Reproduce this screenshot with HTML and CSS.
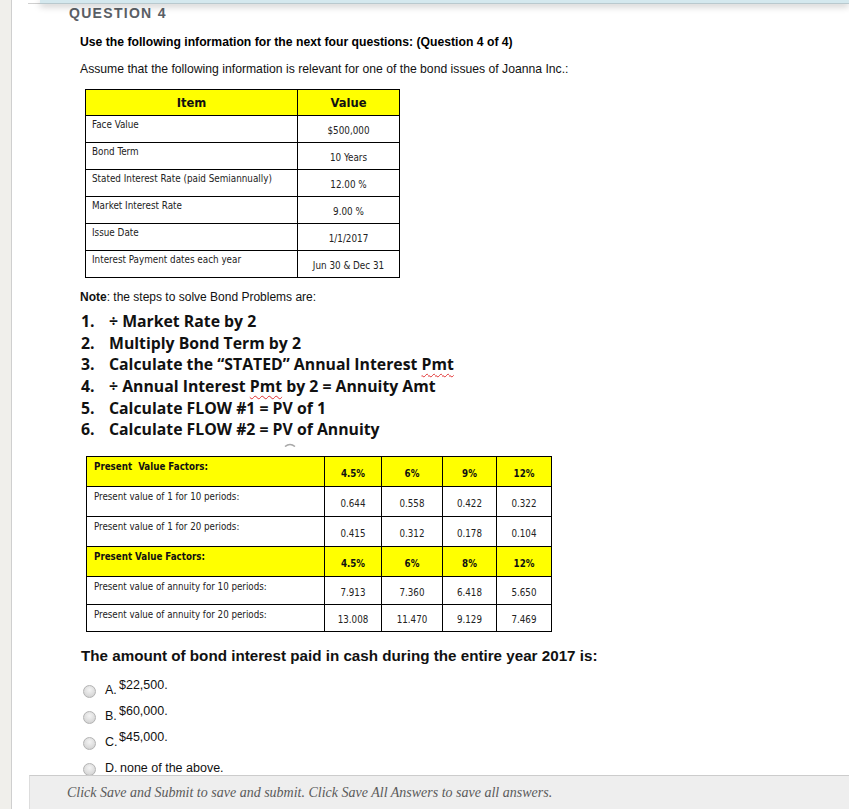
FILE: index.html
```html
<!DOCTYPE html>
<html>
<head>
<meta charset="utf-8">
<link rel="stylesheet" href="styles.css">
</head>
<body>
<div class="page">
  <div class="side"></div>
  <div class="main">
    <div class="topbar"></div>
    <div class="frame">
      <h2 class="qtitle">QUESTION 4</h2>
      <div class="qbody">
        <p class="lead"><b>Use the following information for the next four questions: (Question 4 of 4)</b></p>
        <p class="lead2">Assume that the following information is relevant for one of the bond issues of Joanna Inc.:</p>

        <table class="t1">
          <tr class="yh h26"><th class="c1">Item</th><th class="c2">Value</th></tr>
          <tr class="h27"><td class="lbl">Face Value</td><td class="val">$500,000</td></tr>
          <tr class="h27"><td class="lbl">Bond Term</td><td class="val">10 Years</td></tr>
          <tr class="h27"><td class="lbl">Stated Interest Rate (paid Semiannually)</td><td class="val">12.00 %</td></tr>
          <tr class="h27"><td class="lbl">Market Interest Rate</td><td class="val">9.00 %</td></tr>
          <tr class="h27"><td class="lbl">Issue Date</td><td class="val">1/1/2017</td></tr>
          <tr class="h27"><td class="lbl">Interest Payment dates each year</td><td class="val">Jun 30 &amp; Dec 31</td></tr>
        </table>

        <p class="note"><b>Note</b>: the steps to solve Bond Problems are:</p>
        <ol class="steps">
          <li><span class="num">1.</span><span>÷ Market Rate by 2</span></li>
          <li><span class="num">2.</span><span>Multiply Bond Term by 2</span></li>
          <li><span class="num">3.</span><span>Calculate the “STATED” Annual Interest <span class="sq">Pmt</span></span></li>
          <li><span class="num">4.</span><span>÷ Annual Interest <span class="sq">Pmt</span> by 2 = Annuity Amt</span></li>
          <li><span class="num">5.</span><span>Calculate FLOW #1 = PV of 1</span></li>
          <li class="last"><span class="num">6.</span><span>Calculate FLOW #2 = PV of Annuity</span><svg class="arc" width="12" height="4" viewBox="0 0 12 4"><path d="M1 3.5 Q6 -0.5 11 3.5" fill="none" stroke="#a8a8a8" stroke-width="1.6"/></svg></li>
        </ol>

        <table class="t2">
          <colgroup><col class="k1"><col class="k2"><col class="k3"><col class="k4"><col class="k5"></colgroup>
          <tr class="yh h30"><td class="lbl b">Present&nbsp; Value Factors:</td><td class="val b">4.5%</td><td class="val b">6%</td><td class="val b">9%</td><td class="val b">12%</td></tr>
          <tr class="h30"><td class="lbl">Present value of 1 for 10 periods:</td><td class="val">0.644</td><td class="val">0.558</td><td class="val">0.422</td><td class="val">0.322</td></tr>
          <tr class="h30"><td class="lbl">Present value of 1 for 20 periods:</td><td class="val">0.415</td><td class="val">0.312</td><td class="val">0.178</td><td class="val">0.104</td></tr>
          <tr class="yh h30"><td class="lbl b">Present Value Factors:</td><td class="val b">4.5%</td><td class="val b">6%</td><td class="val b">8%</td><td class="val b">12%</td></tr>
          <tr class="h28"><td class="lbl">Present value of annuity for 10 periods:</td><td class="val">7.913</td><td class="val">7.360</td><td class="val">6.418</td><td class="val">5.650</td></tr>
          <tr class="h27"><td class="lbl">Present value of annuity for 20 periods:</td><td class="val">13.008</td><td class="val">11.470</td><td class="val">9.129</td><td class="val">7.469</td></tr>
        </table>

        <p class="ask">The amount of bond interest paid in cash during the entire year 2017 is:</p>
        <ul class="opts">
          <li><span class="radio"></span><span class="let">A.</span><span class="ans">$22,500.</span></li>
          <li><span class="radio"></span><span class="let">B.</span><span class="ans">$60,000.</span></li>
          <li><span class="radio"></span><span class="let">C.</span><span class="ans">$45,000.</span></li>
          <li><span class="radio"></span><span class="let">D.</span><span class="ans flat">none of the above.</span></li>
        </ul>
      </div>
    </div>
    <div class="footer">Click Save and Submit to save and submit. Click Save All Answers to save all answers.</div>
  </div>
</div>
</body>
</html>
```

FILE: styles.css
```css
html, body {
  margin: 0;
  padding: 0;
  background: #ffffff;
  font-family: "Liberation Sans", Arial, sans-serif;
  color: #000;
}
.page {
  display: flex;
  height: 809px;
  overflow: hidden;
}
.side {
  flex: none;
  width: 11px;
  background: #f0efeb;
  border-right: 1px solid #cfcfcf;
}
.main {
  flex: 1;
  position: relative;
  overflow: hidden;
}
.topbar {
  position: absolute;
  top: 0;
  left: 28px;
  right: 0;
  height: 3px;
  background: #d4e8ee;
  border-bottom: 1px solid #b9c9ce;
  box-shadow: 0 2px 7px rgba(0, 0, 0, 0.28);
  z-index: 2;
}
.frame {
  margin-left: 16px;
  margin-top: 3px;
  border-top: 1px solid #d0d0d0;
}
.qtitle {
  margin: 0;
  padding: 1px 0 0 41px;
  font-size: 14px;
  line-height: 16px;
  font-weight: bold;
  letter-spacing: 1.3px;
  color: #5a6066;
}
.qbody {
  padding-left: 52px;
}
.lead {
  margin: 13px 0 0 0;
  font-size: 12.2px;
  line-height: 16px;
}
.lead2 {
  margin: 11px 0 0 0;
  font-size: 12.2px;
  line-height: 16px;
  color: #111;
}
.t1, .t2 {
  border-collapse: collapse;
  font-family: "DejaVu Sans Condensed", "DejaVu Sans", sans-serif;
  color: #222;
}
.t1 {
  margin: 12px 0 0 5px;
  width: 315px;
  table-layout: fixed;
}
.t1 td, .t1 th, .t2 td {
  border: 1.5px solid #000;
  padding: 0;
  box-sizing: border-box;
}
.h26 { height: 26px; }
.h27 { height: 27px; }
.h28 { height: 28px; }
.h30 { height: 30px; }
.yh th, .yh td {
  background: #ffff00;
}
.t1 th {
  font-size: 12.8px;
  line-height: 14px;
  font-weight: bold;
  color: #111;
  text-align: center;
  vertical-align: middle;
}
.t1 .c1 { width: 212px; }
.t1 .lbl {
  vertical-align: top;
  font-size: 9.8px;
  padding: 3px 0 0 6px;
  line-height: 11px;
}
.t1 .val {
  vertical-align: middle;
  text-align: center;
  font-size: 9.8px;
  padding-top: 3px;
  line-height: 11px;
}
.note {
  margin: 12px 0 0 0;
  font-size: 12px;
  line-height: 15px;
  color: #111;
}
.steps {
  list-style: none;
  margin: 6px 0 0 1px;
  padding: 0;
  font-family: "Open Sans", Lato, sans-serif;
  font-weight: bold;
  font-size: 15.8px;
  line-height: 21.66px;
  color: #111;
}
.steps li {
  display: flex;
  position: relative;
}
.steps .num {
  width: 28px;
  flex: none;
}
.sq {
  text-decoration: underline wavy #e03030;
  text-decoration-thickness: 1px;
  text-underline-offset: 3px;
}
.arc {
  position: absolute;
  left: 203px;
  top: 24px;
}
.t2 {
  margin: 15px 0 0 6px;
  width: 465px;
  table-layout: fixed;
}
.k1 { width: 238px; }
.k2 { width: 57px; }
.k3 { width: 61px; }
.k4 { width: 54px; }
.k5 { width: 55px; }
.t2 .lbl {
  vertical-align: top;
  font-size: 9.7px;
  line-height: 11px;
  padding: 4px 0 0 7px;
}
.t2 .val {
  vertical-align: middle;
  text-align: center;
  font-size: 9.7px;
  line-height: 11px;
  padding-top: 4px;
}
.t2 .b {
  font-weight: bold;
  color: #111;
}
.ask {
  margin: 15px 0 0 1px;
  font-size: 15.2px;
  line-height: 17px;
  font-weight: bold;
  color: #111;
}
.opts {
  list-style: none;
  margin: 15px 0 0 0;
  padding: 0;
  font-size: 12.5px;
  color: #111;
}
.opts li {
  display: flex;
  align-items: flex-start;
  height: 26px;
}
.radio {
  flex: none;
  width: 11px;
  height: 11px;
  border-radius: 50%;
  border: 1px solid #b3b3b3;
  background: radial-gradient(circle at 50% 35%, #f4f4f4 0%, #dcdcdc 60%, #c8c8c8 100%);
  margin: 6px 9px 0 3px;
}
.let {
  width: 14px;
  flex: none;
  line-height: 16px;
  padding-top: 3px;
}
.ans {
  line-height: 16px;
  margin-top: -2px;
}
.ans.flat {
  margin-top: 3px;
  margin-left: 1px;
}
.footer {
  position: absolute;
  left: 17px;
  right: 0;
  bottom: 0;
  height: 33px;
  background: #eeeeee;
  border-top: 1px solid #cccccc;
  border-left: 1px solid #dddddd;
  font-family: "Liberation Serif", "Times New Roman", serif;
  font-style: italic;
  font-size: 14px;
  line-height: 33px;
  padding-left: 37px;
  color: #5a5a5a;
  z-index: 3;
}
```
